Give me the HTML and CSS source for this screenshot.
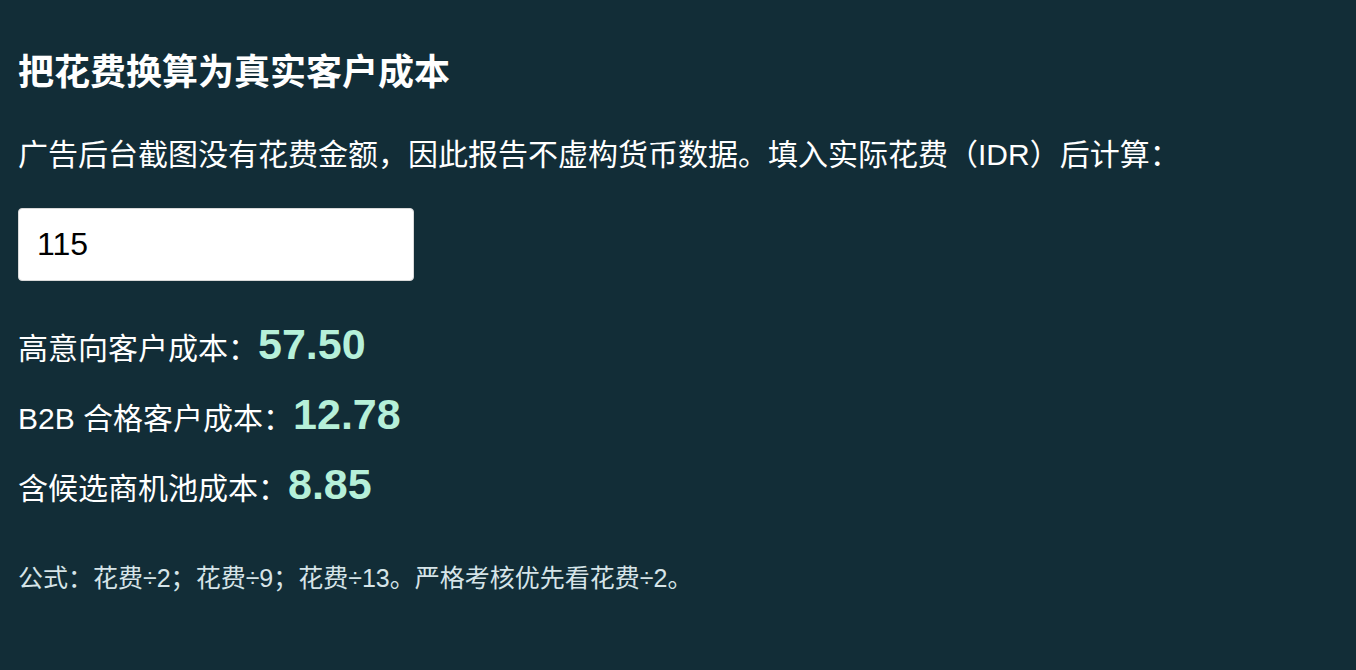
FILE: index.html
```html
<!DOCTYPE html>
<html>
<head>
    <meta charset="utf-8" />
    <title>花费换算</title>
    <link rel="stylesheet" href="styles.css">
    <script>
        window.addEventListener('load', function () {
            spendinput = document.getElementById('spend');
            spendinput.addEventListener('input', calcfun);
            calcfun();
        });//end of load
        function calcfun() {
            var spend = parseFloat(spendinput.value) || 0;
            document.getElementById('costhigh').textContent = (spend / 2).toFixed(2);
            document.getElementById('costb2b').textContent = (spend / 9).toFixed(2);
            document.getElementById('costpool').textContent = (spend / 13).toFixed(2);
        }
    </script>
</head>
<body>
    <section class="calc">
        <h1 class="calc-title">把花费换算为真实客户成本</h1>
        <p class="calc-intro">广告后台截图没有花费金额，因此报告不虚构货币数据。填入实际花费（IDR）后计算：</p>
        <input class="calc-input" id="spend" type="text" value="115" />
        <div class="calc-results">
            <div class="calc-row">高意向客户成本：<span class="calc-num" id="costhigh">57.50</span></div>
            <div class="calc-row">B2B 合格客户成本：<span class="calc-num" id="costb2b">12.78</span></div>
            <div class="calc-row">含候选商机池成本：<span class="calc-num" id="costpool">8.85</span></div>
        </div>
        <p class="calc-note">公式：花费÷2；花费÷9；花费÷13。严格考核优先看花费÷2。</p>
    </section>
</body>
</html>
```

FILE: styles.css
```css
* {
    padding: 0;
    margin: 0;
    box-sizing: border-box;
}
body {
    background-color: #122d37;
    color: #ffffff;
    font-family: "Liberation Sans", "Noto Sans CJK SC", sans-serif;
    font-size: 30px;
    min-height: 100vh;
}
.calc {
    padding: 52px 18px 40px;
    display: flex;
    flex-direction: column;
    align-items: flex-start;
}
.calc-title {
    font-size: 36px;
    line-height: 42px;
    font-weight: bold;
}
.calc-intro {
    margin-top: 44px;
    line-height: 34px;
}
.calc-input {
    margin-top: 36px;
    width: 396px;
    height: 73px;
    padding: 0 18px;
    border: 1px solid #d9d9d9;
    border-radius: 4px;
    background: #ffffff;
    color: #000000;
    font-family: inherit;
    font-size: 32px;
}
.calc-results {
    margin-top: 42px;
    display: flex;
    flex-direction: column;
    gap: 20px;
}
.calc-row {
    line-height: 48px;
}
.calc-num {
    font-size: 43px;
    line-height: 1;
    font-weight: bold;
    color: #b6f0d9;
}
.calc-note {
    margin-top: 50px;
    font-size: 25px;
    line-height: 30px;
    color: #d6e4e8;
}
```
